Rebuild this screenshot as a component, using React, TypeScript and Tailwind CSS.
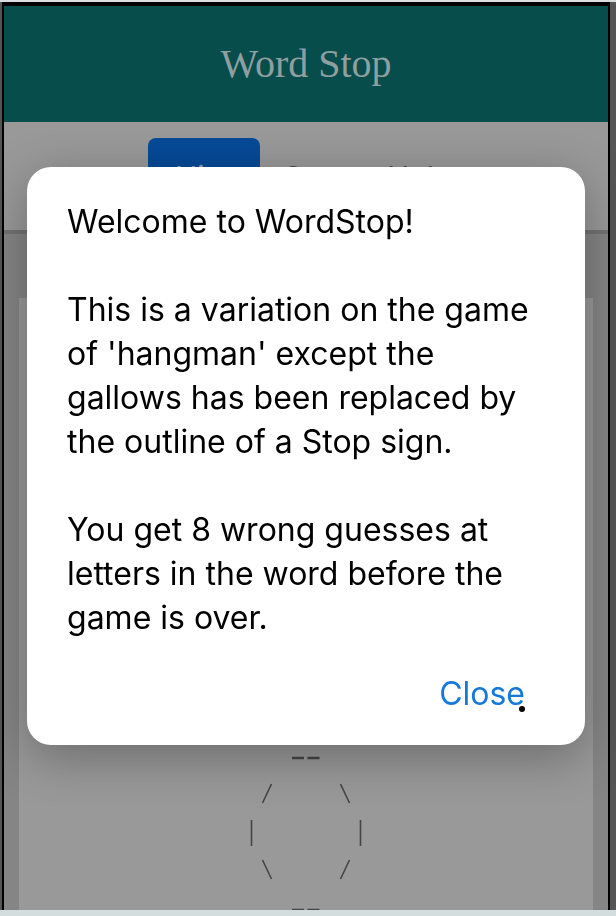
import React from "react";

function Header() {
  return (
    <header className="flex h-[116px] items-center justify-center bg-[#074d4b]">
      <h1 className="font-['Liberation_Serif',serif] text-[40px] leading-11 text-[#8f9fa0]">
        Word Stop
      </h1>
    </header>
  );
}

function Nav() {
  return (
    <nav className="flex h-[112px] justify-center gap-6 border-b-4 border-[#737373] bg-[#999999] pt-4 pr-3 font-['Inter',sans-serif] text-3xl text-[#4c4c4c]">
      <button type="button" className="h-[78px] w-28 rounded-lg bg-[#064a97] text-[#8fa4c0]">
        Hint
      </button>
      <div className="flex h-[78px] gap-8">
        <button type="button">Stats</button>
        <button type="button">Help</button>
      </div>
    </nav>
  );
}

function StopSign() {
  return (
    <svg
      viewBox="0 0 120 160"
      className="h-40 w-[120px]"
      fill="none"
      stroke="#454545"
      strokeWidth="1.6"
      role="img"
      aria-label="Stop sign outline"
    >
      <path d="M46 8H58M61.5 8H73.5M46 160H58M61.5 160H73.5" strokeWidth="2.5" />
      <path d="M25.5 34L16.5 53M94.5 34L103.5 53M5.5 70V96M114.5 70V96M16.5 110L25.5 129M103.5 110L94.5 129" />
    </svg>
  );
}

function WelcomeDialog() {
  return (
    <div className="fixed inset-0 flex items-start justify-center pt-[167px] pr-[31px] pl-[27px]">
      <section
        role="dialog"
        aria-label="Welcome"
        className="w-full max-w-[560px] rounded-3xl bg-white px-10 pt-[33px] pb-[29px] font-['Inter',sans-serif] text-[32px] leading-11 text-black shadow-[0_12px_50px_rgba(0,0,0,0.3)]"
      >
        <p>Welcome to WordStop!</p>
        <p className="mt-11">
          This is a variation on the game of 'hangman' except the gallows has been replaced by the outline of a Stop sign.
        </p>
        <p className="mt-11">
          You get 8 wrong guesses at letters in the word before the game is over.
        </p>
        <div className="mt-8 flex justify-end pr-5">
          <button type="button" className="relative text-[#1579dc]">
            Close
            <span className="absolute right-0 bottom-1 size-[6px] rounded-full bg-black" />
          </button>
        </div>
      </section>
    </div>
  );
}

export default function App() {
  return (
    <div className="flex h-screen flex-col overflow-hidden border-t-2 border-b-6 border-t-[#dadddd] border-b-[#d3dddd] bg-[#555555] pr-[6px] pl-[2px]">
      <div className="flex min-h-0 flex-1 flex-col overflow-hidden border-x-2 border-t-4 border-black bg-[#858585]">
        <Header />
        <Nav />
        <main className="mx-[15px] mt-16 flex flex-1 items-end justify-center bg-[#999999]">
          <StopSign />
        </main>
      </div>
      <WelcomeDialog />
    </div>
  );
}
